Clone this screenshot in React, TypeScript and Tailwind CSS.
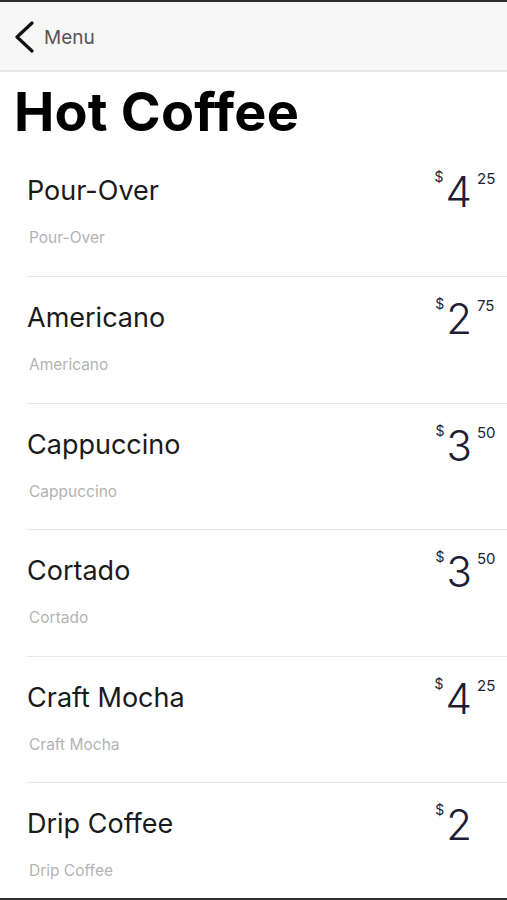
import React from 'react';

const items = [
  { name: 'Pour-Over', dollars: '4', cents: '25' },
  { name: 'Americano', dollars: '2', cents: '75' },
  { name: 'Cappuccino', dollars: '3', cents: '50' },
  { name: 'Cortado', dollars: '3', cents: '50' },
  { name: 'Craft Mocha', dollars: '4', cents: '25' },
  { name: 'Drip Coffee', dollars: '2', cents: '' },
];

export default function App() {
  return (
    <div
      className="h-[900px] w-[507px] overflow-hidden border-y-2 border-[#2e2e2e] bg-white flex flex-col"
      style={{ fontFamily: 'Inter, "Noto Sans", sans-serif' }}
    >
      {/* Nav bar */}
      <div className="h-[70px] shrink-0 bg-[#f7f7f7] border-b-2 border-[#e6e6e6] flex items-center pl-[14px] gap-[10px]">
        <svg width="20" height="32" viewBox="0 0 20 32" fill="none" className="mt-[2px]">
          <path d="M18 2 L3 16 L18 30" stroke="#111" strokeWidth="3.2" strokeLinecap="round" strokeLinejoin="round" />
        </svg>
        <span className="text-[19px] text-[#555] mt-[5px]">Menu</span>
      </div>

      <h1 className="pl-[14px] pt-[9px] mb-[6.5px] text-[54px] leading-[62px] font-bold text-black tracking-[0.2px]">
        Hot Coffee
      </h1>

      <div className="ml-[27px] flex flex-col">
        {items.map((item, i) => (
          <div
            key={item.name}
            className={`h-[126.5px] shrink-0 flex justify-between pr-[12px] ${i > 0 ? 'border-t border-[#e8e8e8]' : ''}`}
          >
            <div className="flex flex-col pt-[25px]">
              <span className="text-[27px] leading-[32px] text-[#1a1a1a]">{item.name}</span>
              <span className="mt-[22px] pl-[2px] text-[15.5px] leading-[18px] text-[#b3b3b3]">{item.name}</span>
            </div>
            <div className="flex items-start pt-[15px] text-[#1d1d35]">
              <span className="text-[14px] leading-[16px] mt-[4px]">$</span>
              <span className="text-[42px] leading-[46px] font-[350] ml-[2px] mt-[4px]">{item.dollars}</span>
              <span className="text-[15px] leading-[16px] mt-[6px] ml-[5px] w-[18px]">{item.cents}</span>
            </div>
          </div>
        ))}
      </div>
    </div>
  );
}
